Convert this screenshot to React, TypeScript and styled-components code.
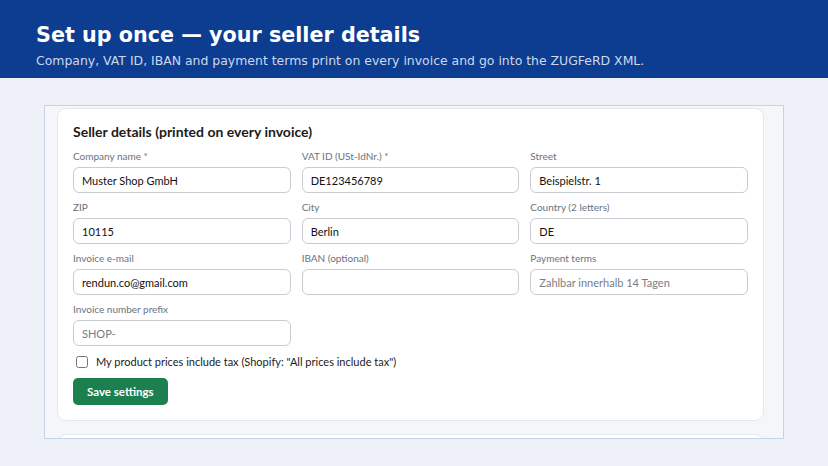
import React from "react";
import styled, { createGlobalStyle } from "styled-components";

const GlobalStyle = createGlobalStyle`
  * { box-sizing: border-box; }
  html, body { margin: 0; padding: 0; }
  body {
    background: #edf0f7;
    font-family: "DejaVu Sans", sans-serif;
  }
`;

interface Field {
  id: string;
  label: string;
  value?: string;
  placeholder?: string;
}

const FIELDS: Field[] = [
  { id: "company", label: "Company name *", value: "Muster Shop GmbH" },
  { id: "vat", label: "VAT ID (USt-IdNr.) *", value: "DE123456789" },
  { id: "street", label: "Street", value: "Beispielstr. 1" },
  { id: "zip", label: "ZIP", value: "10115" },
  { id: "city", label: "City", value: "Berlin" },
  { id: "country", label: "Country (2 letters)", value: "DE" },
  { id: "email", label: "Invoice e-mail", value: "rendun.co@gmail.com" },
  { id: "iban", label: "IBAN (optional)" },
  { id: "terms", label: "Payment terms", placeholder: "Zahlbar innerhalb 14 Tagen" },
  { id: "prefix", label: "Invoice number prefix", placeholder: "SHOP-" },
];

function App() {
  return (
    <>
      <GlobalStyle />
      <Header>
        <Title>Set up once — your seller details</Title>
        <Subtitle>
          Company, VAT ID, IBAN and payment terms print on every invoice and go
          into the ZUGFeRD XML.
        </Subtitle>
      </Header>
      <Main>
        <Frame>
          <Card>
            <CardTitle>Seller details (printed on every invoice)</CardTitle>
            <FieldGrid>
              {FIELDS.map((f) => (
                <FieldBox key={f.id}>
                  <Label htmlFor={f.id}>{f.label}</Label>
                  <Input
                    id={f.id}
                    defaultValue={f.value}
                    placeholder={f.placeholder}
                  />
                </FieldBox>
              ))}
            </FieldGrid>
            <CheckRow>
              <Checkbox type="checkbox" />
              My product prices include tax (Shopify: "All prices include tax")
            </CheckRow>
            <SaveButton type="button">Save settings</SaveButton>
          </Card>
          <NextCard />
        </Frame>
      </Main>
    </>
  );
}

export default App;

const Header = styled.header`
  background: #0c3d91;
  color: #fff;
  height: 78px;
  padding: 22px 36px 0;
`;
const Title = styled.h1`
  margin: 0;
  font-family: "DejaVu Sans", sans-serif;
  font-size: 20.7px;
  font-weight: 700;
  line-height: 26px;
`;
const Subtitle = styled.p`
  margin: 5px 0 0;
  font-size: 12.45px;
  line-height: 16px;
  color: #cdd8ee;
`;
const Main = styled.main`
  padding: 27px 44px 0;
`;
const Frame = styled.div`
  height: 334px;
  overflow: hidden;
  border: 1px solid #c6d3e8;
  background: #f4f6f9;
  padding: 2px 19px 0 12px;
`;
const Card = styled.section`
  background: #fff;
  border: 1px solid #e4e7eb;
  border-radius: 9px;
  padding: 14px 15px 15px 15px;
  font-family: "Lato", "Open Sans", sans-serif;
  color: #111;
`;
const NextCard = styled.div`
  margin-top: 13px;
  height: 40px;
  background: #fff;
  border: 1px solid #e4e7eb;
  border-radius: 9px;
`;
const CardTitle = styled.h2`
  margin: 0 0 9px;
  font-size: 14px;
  font-weight: 700;
  line-height: 18px;
  color: #1b1b1b;
`;
const FieldGrid = styled.div`
  display: grid;
  grid-template-columns: repeat(3, 1fr);
  column-gap: 11px;
  row-gap: 8px;
`;
const FieldBox = styled.div`
  display: flex;
  flex-direction: column;
`;
const Label = styled.label`
  font-size: 10px;
  line-height: 13px;
  color: #6b7280;
  margin-bottom: 4px;
`;
const Input = styled.input`
  height: 26px;
  border: 1px solid #c9ccd1;
  border-radius: 6px;
  padding: 0 8px;
  font-family: inherit;
  font-size: 11px;
  color: #111;
  background: #fff;
  outline: none;
  &::placeholder {
    color: #7a7d82;
  }
`;
const CheckRow = styled.label`
  display: flex;
  align-items: center;
  gap: 8px;
  margin: 9px 0 0 3px;
  font-size: 11px;
  color: #1b1b1b;
`;
const Checkbox = styled.input`
  margin: 0;
  width: 12px;
  height: 12px;
`;
const SaveButton = styled.button`
  margin-top: 10px;
  height: 27px;
  padding: 0 14px;
  border: none;
  border-radius: 5px;
  background: #1b7f4f;
  color: #fff;
  font-family: inherit;
  font-size: 11.5px;
  font-weight: 700;
  cursor: pointer;
`;
